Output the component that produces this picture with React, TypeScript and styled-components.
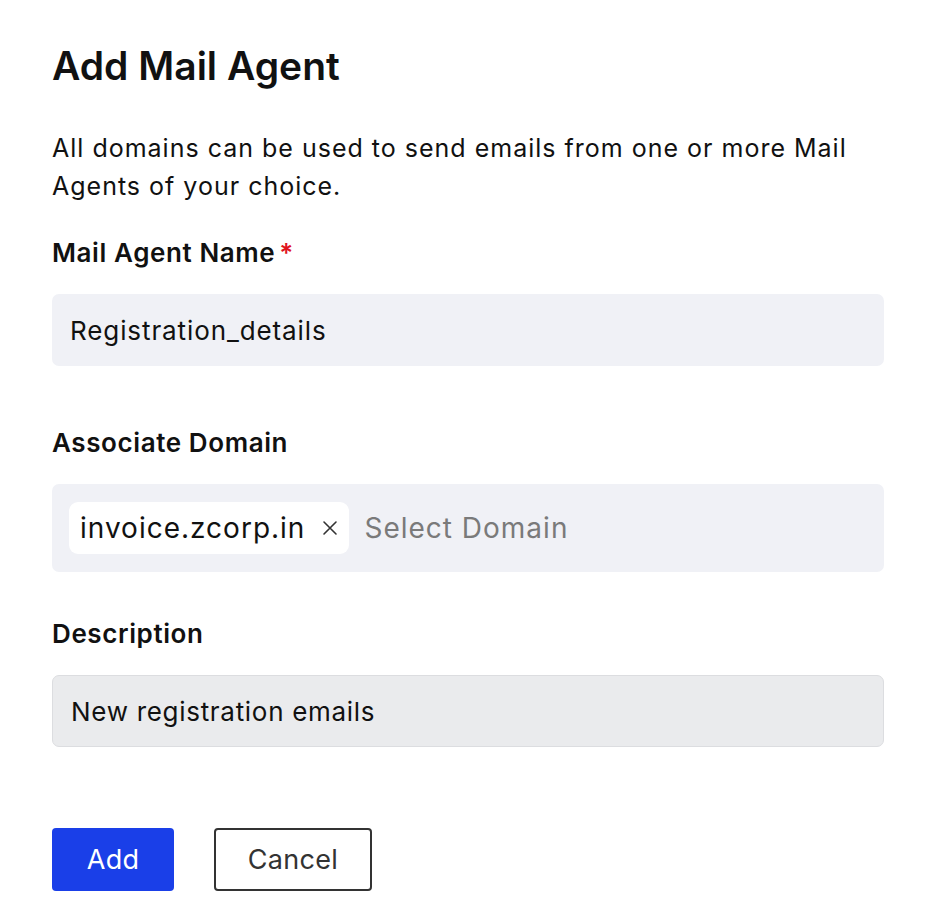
import styled, { createGlobalStyle } from 'styled-components';

const GlobalStyle = createGlobalStyle`
  body {
    margin: 0;
    background: #ffffff;
    font-family: Inter, "Noto Sans", sans-serif;
    color: #111111;
  }
`;

const StyledPage = styled.div`
  display: flex;
  flex-direction: column;
  padding: 42px 52px 0 52px;
`;

const StyledTitle = styled.h1`
  margin: 0;
  font-size: 39px;
  font-weight: 600;
  line-height: 48px;
`;

const StyledIntro = styled.p`
  margin: 39px 0 0 0;
  font-size: 25px;
  line-height: 38px;
  font-weight: 400;
  letter-spacing: 1px;
`;

const StyledLabel = styled.label<{ $gap: number }>`
  display: block;
  margin-top: ${props => props.$gap}px;
  font-size: 26px;
  font-weight: 600;
  line-height: 32px;
  letter-spacing: 0.6px;
`;

const StyledRequired = styled.span`
  color: #e0141e;
  margin-left: 4px;
`;

const StyledField = styled.div<{ $height: number; $disabled?: boolean }>`
  margin-top: 25px;
  height: ${props => props.$height}px;
  box-sizing: border-box;
  display: flex;
  align-items: center;
  gap: 15px;
  padding: 0 18px;
  border-radius: 7px;
  background: ${props => props.$disabled ? '#eaebed' : '#f0f1f6'};
  border: ${props => props.$disabled ? '1.5px solid #dcdde0' : 'none'};
  font-size: 26px;
  letter-spacing: ${props => props.$disabled ? '0.7px' : '0.9px'};
`;

const StyledChip = styled.span`
  display: flex;
  align-items: center;
  gap: 17px;
  height: 52px;
  padding: 0 11px 0 11px;
  margin-left: -1px;
  background: #ffffff;
  border-radius: 9px;
  font-size: 28px;
  letter-spacing: 1px;
`;

const StyledRemove = styled.span`
  display: flex;
  color: #333333;
`;

const StyledPlaceholder = styled.span`
  color: #7a7a7a;
  font-size: 28px;
  letter-spacing: 1px;
`;

const StyledActions = styled.div`
  display: flex;
  gap: 40px;
  margin-top: 81px;
`;

const StyledButton = styled.button<{ $primary?: boolean }>`
  height: 63px;
  box-sizing: border-box;
  padding: 0;
  width: ${props => props.$primary ? '122px' : '158px'};
  border-radius: 4px;
  font-family: inherit;
  font-size: 27px;
  letter-spacing: 0.3px;
  cursor: pointer;
  background: ${props => props.$primary ? '#1a3fe8' : '#ffffff'};
  color: ${props => props.$primary ? '#ffffff' : '#333333'};
  border: ${props => props.$primary ? 'none' : '2px solid #333333'};
`;

function App() {
  return (
    <StyledPage>
      <GlobalStyle />
      <StyledTitle>Add Mail Agent</StyledTitle>
      <StyledIntro>
        All domains can be used to send emails from one or more Mail Agents of your choice.
      </StyledIntro>

      <StyledLabel $gap={32}>
        Mail Agent Name<StyledRequired>*</StyledRequired>
      </StyledLabel>
      <StyledField $height={72}>Registration_details</StyledField>

      <StyledLabel $gap={61}>Associate Domain</StyledLabel>
      <StyledField $height={88}>
        <StyledChip>
          invoice.zcorp.in
          <StyledRemove>
            <svg width="16" height="16" viewBox="0 0 16 16" fill="none" stroke="currentColor" strokeWidth="1.6" strokeLinecap="round">
              <path d="M2 2L14 14M14 2L2 14" />
            </svg>
          </StyledRemove>
        </StyledChip>
        <StyledPlaceholder>Select Domain</StyledPlaceholder>
      </StyledField>

      <StyledLabel $gap={46}>Description</StyledLabel>
      <StyledField $height={72} $disabled>New registration emails</StyledField>

      <StyledActions>
        <StyledButton $primary>Add</StyledButton>
        <StyledButton>Cancel</StyledButton>
      </StyledActions>
    </StyledPage>
  );
}

export default App;
